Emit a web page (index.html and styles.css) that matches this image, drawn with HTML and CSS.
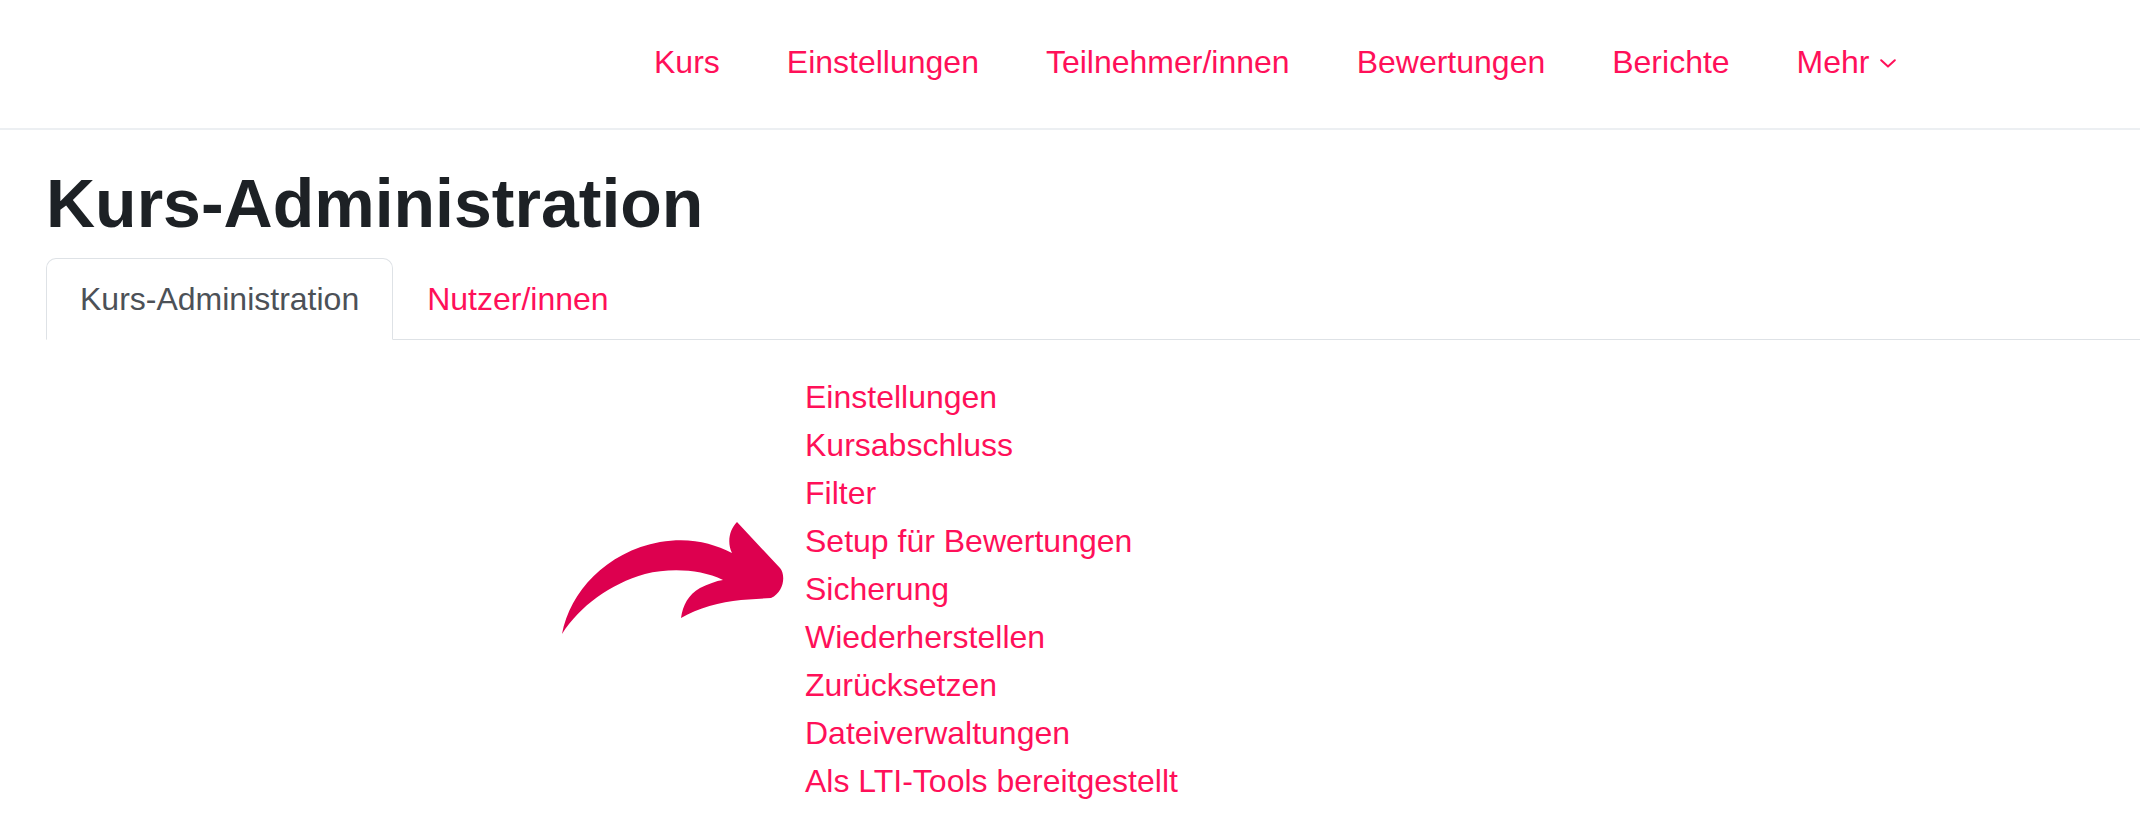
FILE: index.html
```html
<!DOCTYPE html>
<html lang="de">
<head>
<meta charset="utf-8">
<title>Kurs-Administration</title>
<link rel="stylesheet" href="styles.css">
</head>
<body>
<header class="topbar">
  <nav class="primary-nav">
    <a href="#">Kurs</a>
    <a href="#">Einstellungen</a>
    <a href="#">Teilnehmer/innen</a>
    <a href="#">Bewertungen</a>
    <a href="#">Berichte</a>
    <a href="#" class="more">Mehr
      <svg class="chevron" width="16" height="9" viewBox="0 0 16 9"><polyline points="1.2,1.2 8,7.6 14.8,1.2" fill="none" stroke="currentColor" stroke-width="2" stroke-linecap="round" stroke-linejoin="round"/></svg>
    </a>
  </nav>
</header>
<main class="page">
  <h1 class="page-title">Kurs-Administration</h1>
  <ul class="tabs">
    <li class="tab active">Kurs-Administration</li>
    <li class="tab"><a href="#">Nutzer/innen</a></li>
  </ul>
  <section class="admin-row">
    <div class="admin-side"></div>
    <ul class="admin-links">
      <li><a href="#">Einstellungen</a></li>
      <li><a href="#">Kursabschluss</a></li>
      <li><a href="#">Filter</a></li>
      <li><a href="#">Setup für Bewertungen</a></li>
      <li><a href="#">Sicherung</a></li>
      <li><a href="#">Wiederherstellen</a></li>
      <li><a href="#">Zurücksetzen</a></li>
      <li><a href="#">Dateiverwaltungen</a></li>
      <li><a href="#">Als LTI-Tools bereitgestellt</a></li>
    </ul>
  </section>
</main>
<svg class="annotation-arrow" width="240" height="125" viewBox="555 515 240 125">
  <path d="M 562 634 C 570 592, 606 552, 660 542 C 690 537, 712 543, 732 553 C 727 543, 729 530, 737 522 L 780 568 C 786 575, 784 592, 771 598 L 741 600 C 720 602, 698 608, 681 618 C 683 605, 688 595, 700 588 C 708 584, 716 581, 723 580 C 700 569, 670 568, 645 574 C 610 584, 580 606, 562 634 Z" fill="#dd004f"/>
</svg>
</body>
</html>
```
FILE: styles.css
```css
html, body {
  margin: 0;
  padding: 0;
  background: #ffffff;
}
body {
  position: relative;
  font-family: "Liberation Sans", Arial, sans-serif;
  font-size: 32px;
  line-height: 48px;
  color: #1d2125;
}
a {
  color: #ff1059;
  text-decoration: none;
}
.topbar {
  box-sizing: border-box;
  height: 130px;
  border-bottom: 2px solid #eceff2;
  display: flex;
  align-items: center;
  padding-bottom: 4px;
}
.primary-nav {
  display: flex;
  align-items: center;
  gap: 67px;
  padding-left: 654px;
}
.primary-nav a {
  white-space: nowrap;
}
.primary-nav .more {
  display: inline-flex;
  align-items: center;
  gap: 10px;
}
.chevron {
  margin-top: 3px;
}
.page {
  padding: 33px 0 0 46px;
}
.page-title {
  margin: 0 0 15px 0;
  font-size: 68px;
  line-height: 80px;
  font-weight: 700;
  color: #1d2125;
}
.tabs {
  display: flex;
  list-style: none;
  margin: 0;
  padding: 0;
  border-bottom: 1px solid #dee2e6;
}
.tab {
  padding: 16px 33px;
  border: 1px solid transparent;
  border-radius: 10px 10px 0 0;
  margin-bottom: -1px;
  white-space: nowrap;
}
.tab.active {
  border-color: #dee2e6 #dee2e6 #ffffff;
  background: #ffffff;
  color: #4c5157;
}
.admin-row {
  display: grid;
  grid-template-columns: 759px 1fr;
  padding-top: 33px;
}
.admin-links {
  list-style: none;
  margin: 0;
  padding: 0;
}
.admin-links li {
  line-height: 48px;
}
.annotation-arrow {
  position: absolute;
  left: 555px;
  top: 515px;
}
```
